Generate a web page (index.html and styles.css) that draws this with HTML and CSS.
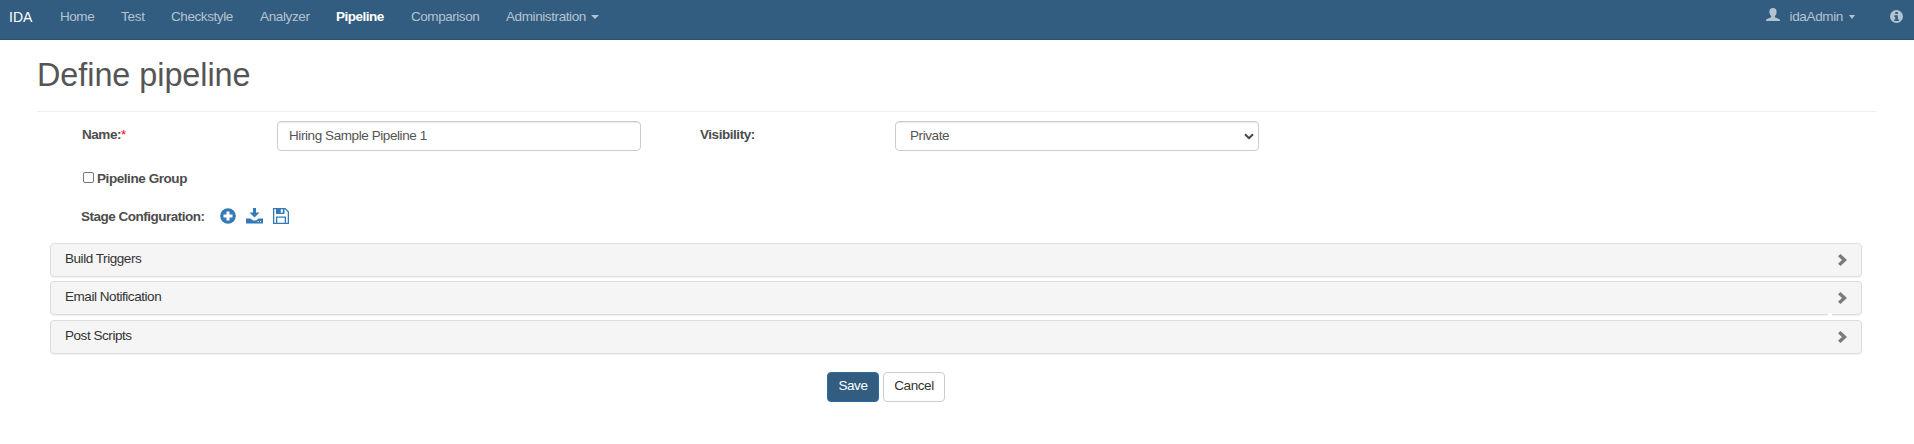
FILE: index.html
```html
<!DOCTYPE html>
<html lang="en">
<head>
<meta charset="utf-8">
<title>IDA - Define pipeline</title>
<link rel="stylesheet" href="styles.css">
</head>
<body>
<nav class="navbar">
  <a class="brand">IDA</a>
  <a class="nav-home">Home</a>
  <a class="nav-test">Test</a>
  <a class="nav-check">Checkstyle</a>
  <a class="nav-analyzer">Analyzer</a>
  <a class="nav-pipeline">Pipeline</a>
  <a class="nav-comparison">Comparison</a>
  <a class="nav-admin">Administration<i class="caret"></i></a>
  <a class="nav-user"><svg class="user-icon" width="14" height="13" viewBox="0 0 14 13"><path d="M7 0C4.7 0 3.2 1.5 3.4 4c.1 2 .8 3.2 1.7 4v1.2L1 11C.3 11.3 0 12 0 13h14c0-1-.3-1.700-1-2L8.900 9.200V8c.9-.8 1.600-2 1.700-4C10.800 1.500 9.300 0 7 0z"/></svg>idaAdmin<i class="caret"></i></a>
  <a class="nav-info"><svg width="13" height="13" viewBox="0 0 13 13"><circle cx="6.500" cy="6.500" r="6.500"/><path class="cut" d="M5.300 2h2.500v2H5.300zM4.300 5.200h3.500v4h1V11H4.300V9.200h1V7h-1z"/></svg></a>
</nav>
<main class="page">
  <h1>Define pipeline</h1>
  <form class="form">
    <div class="fields">
      <label class="lbl">Name:<span class="req">*</span></label>
      <input class="control" type="text" value="Hiring Sample Pipeline 1">
      <label class="lbl">Visibility:</label>
      <div class="select-wrap control"><span>Private</span><svg width="10" height="7" viewBox="0 0 10 7"><path d="M1 1.200l4 4 4-4"/></svg></div>
    </div>
    <label class="group"><input type="checkbox" class="check"><span>Pipeline Group</span></label>
    <div class="stage">
      <span class="stage-label">Stage Configuration:</span>
      <svg width="16" height="16" viewBox="0 0 16 16"><circle cx="8" cy="8" r="7.800"/><path class="white" d="M6.500 3.500h3v3h3v3h-3v3h-3v-3h-3v-3h3z"/></svg>
      <svg width="17" height="16" viewBox="0 0 17 16"><path d="M7 0h3v4.500h3.500l-5 5-5-5H7z"/><path fill-rule="evenodd" d="M0 10.500h4.500L7 12.500h3l2.500-2H17V15.500H0zM11.500 13v1h1v-1zM14 13v1h1v-1z"/></svg>
      <svg width="16" height="16" viewBox="0 0 16 16"><path fill-rule="evenodd" d="M0 0h12.500L16 3.500V16H0zM1.300 1.300v13.400H3V8.500h10v6.200h1.700V4L12 1.300h-.5V6H3V1.300zM4.300 9.800v4.900h7.400V9.800zM7.800 1.300v3.400h2V1.300z"/></svg>
    </div>
    <div class="panels">
      <div class="panel"><span>Build Triggers</span><svg class="chev" width="9" height="12" viewBox="0 0 9 12"><path d="M2.500 0L9 6l-6.500 6L0 9.700 4 6 0 2.300z"/></svg></div>
      <div class="panel notch"><span>Email Notification</span><svg class="chev" width="9" height="12" viewBox="0 0 9 12"><path d="M2.500 0L9 6l-6.500 6L0 9.700 4 6 0 2.300z"/></svg></div>
      <div class="panel last"><span>Post Scripts</span><svg class="chev" width="9" height="12" viewBox="0 0 9 12"><path d="M2.500 0L9 6l-6.500 6L0 9.700 4 6 0 2.300z"/></svg></div>
    </div>
    <div class="actions">
      <button type="button" class="btn save">Save</button>
      <button type="button" class="btn cancel">Cancel</button>
    </div>
  </form>
</main>
</body>
</html>
```
FILE: styles.css
```css
* { box-sizing: border-box; }
body {
  margin: 0;
  background: #fff;
  color: #4d4d4d;
  font: 13.5px/18px "Liberation Sans", Arial, sans-serif;
  letter-spacing: -.45px;
}
svg { display: block; flex: none; }
.navbar {
  display: flex;
  height: 40px;
  padding: 8px 11px 0 9px;
  background: #335d80;
  border-bottom: 1px solid #2b5375;
  color: #b3c3d0;
}
.navbar a { display: flex; flex: none; white-space: nowrap; }
.brand { width: 51px; color: #fff; font-size: 14px; letter-spacing: 0; }
.nav-home { width: 61px; }
.nav-test { width: 50px; letter-spacing: -.25px; }
.nav-check { width: 89px; letter-spacing: -.42px; }
.nav-analyzer { width: 76px; letter-spacing: -.37px; }
.nav-pipeline { width: 75px; color: #fff; font-weight: bold; letter-spacing: -.5px; }
.nav-comparison { width: 95px; letter-spacing: -.45px; }
.nav-admin { letter-spacing: -.4px; }
.caret {
  width: 0;
  height: 0;
  margin: 7px 0 0 5px;
  border: 4px solid transparent;
  border-top-color: #b3c3d0;
  border-bottom: 0;
}
.nav-user { margin-left: auto; letter-spacing: -.35px; }
.nav-user .caret { border-width: 4px 3.500px 0; margin-left: 6px; }
.user-icon { margin-right: 10px; }
.nav-info { margin: 2px 0 0 35px; }
.navbar svg { fill: #b3c3d0; }
.navbar .cut { fill: #335d80; }
.page { padding: 17px 38px 0 37px; }
h1 {
  height: 55px;
  margin: 0;
  border-bottom: 1px solid #eee;
  color: #555;
  font-size: 32.4px;
  line-height: 36px;
  font-weight: normal;
  letter-spacing: -.05px;
}
.fields {
  display: grid;
  grid-template-columns: 195px 364px 254px 364px;
  padding: 9px 0 0 45px;
}
.lbl { padding: 5px 0 0; font-weight: bold; }
.lbl:nth-of-type(2) { padding-left: 59px; }
.req { color: #f00; font-weight: normal; }
.control {
  height: 30px;
  padding: 0 11px 2px;
  border: 1px solid #ccc;
  border-radius: 4px;
  background: #fff;
  box-shadow: inset 0 1px 1px rgba(0, 0, 0, .075);
  color: #555;
  font: inherit;
  letter-spacing: -.42px;
}
.select-wrap { display: flex; align-items: center; justify-content: space-between; padding: 0 4px 0 14px; }
.select-wrap path { fill: none; stroke: #444; stroke-width: 2; }
.group { display: flex; padding: 19px 0 0 46px; font-weight: bold; letter-spacing: -.43px; }
.check {
  width: 11px;
  height: 11px;
  margin: 2px 3px 0 0;
  border: 1px solid #767676;
  border-radius: 2px;
  appearance: none;
}
.stage { display: flex; align-items: center; height: 18px; margin: 20px 0 0 44px; gap: 10px; }
.stage-label { width: 129px; font-weight: bold; letter-spacing: -.5px; }
.stage svg { margin-bottom: 2px; fill: #337ab7; }
.stage .white { fill: #fff; }
.panels { display: grid; gap: 4px; margin: 17px 14px 0 13px; }
.panel {
  position: relative;
  display: flex;
  justify-content: space-between;
  height: 34px;
  padding: 6px 14px 0;
  background: #f5f5f5;
  border: 1px solid #ddd;
  border-radius: 4px;
  box-shadow: 0 1px 1px rgba(0, 0, 0, .05);
  color: #333;
}
.notch::after {
  content: "";
  position: absolute;
  right: 29px;
  bottom: -2px;
  width: 4px;
  height: 3px;
  background: #fff;
}
.last { margin-top: 1px; }
.chev { margin-top: 4px; fill: #7b7b7b; }
.actions { display: flex; gap: 4px; margin: 18px 0 0 790px; }
.btn {
  height: 30px;
  padding: 0 0 3px;
  border: 1px solid #ccc;
  border-radius: 4px;
  background: #fff;
  color: #333;
  font: inherit;
  letter-spacing: -.4px;
}
.save { width: 52px; border-color: #2e6da4; background: #335d80; color: #fff; }
.cancel { width: 62px; }
```
